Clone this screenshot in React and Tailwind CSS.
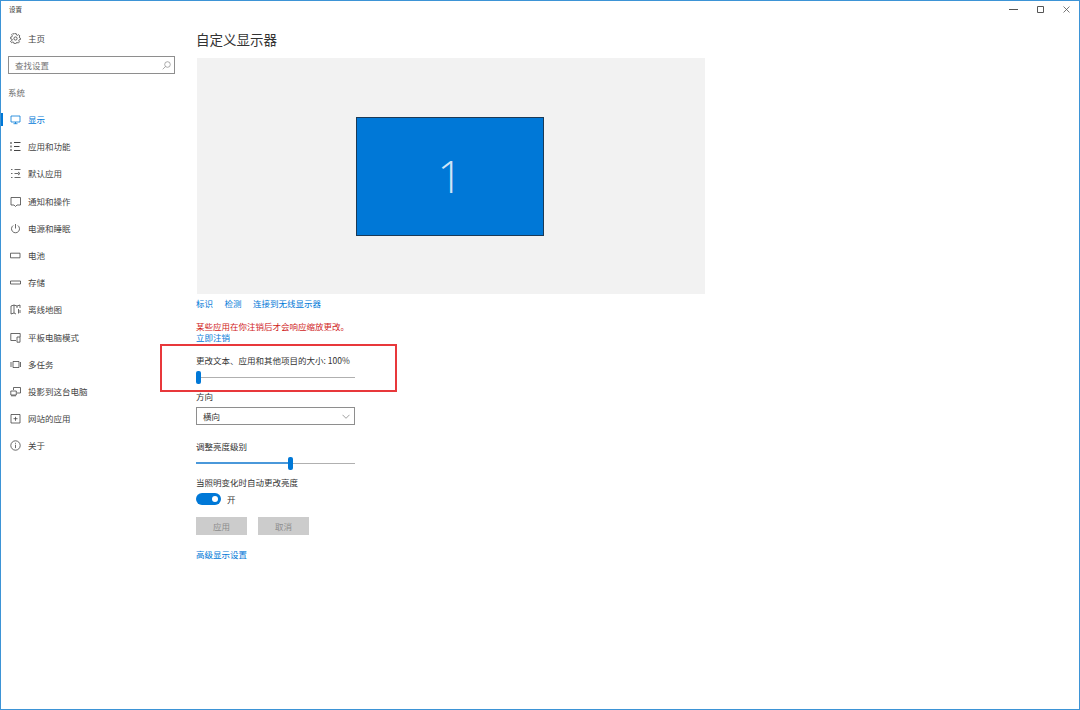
const Icon = ({ children }) => (
  <svg width="11" height="11" viewBox="0 0 11 11" fill="none" stroke="currentColor" strokeWidth="0.8" className="shrink-0">
    {children}
  </svg>
);

const navItems = [
  {
    label: '显示',
    active: true,
    icon: <path d="M1 2h9v6H1zM3.500 9.700h4M5.500 8v1.700" />,
  },
  {
    label: '应用和功能',
    icon: <path d="M1 1v2M1 4.500v2M1 8v2M4 1.500h6.500M4 5.500h5.500M4 9.500h6.500" strokeWidth="1.100" />,
  },
  {
    label: '默认应用',
    icon: <path d="M1 1.500h1.500M1 5.500h1.500M1 9.500h1.500M4.500 1.500h6M4.500 5.500h4M8 4l2 1.500L8 7M4.500 9.500h6" />,
  },
  {
    label: '通知和操作',
    icon: <path d="M1 1.500h9.500v7.500H7L5.500 10.500 4 9H1z" />,
  },
  {
    label: '电源和睡眠',
    icon: (
      <>
        <path d="M3.200 2.500a4 4 0 1 0 4.600 0" />
        <path d="M5.500 1v4.500" />
      </>
    ),
  },
  {
    label: '电池',
    icon: <path d="M.5 3.200h9.500v4.600H.5z" />,
  },
  {
    label: '存储',
    icon: <path d="M.5 4h10v3H.5z" />,
  },
  {
    label: '离线地图',
    icon: <path d="M1 2l3-1 3 1 3-1v3M1 2v8l3-1 2 1M4 1v8M7 2v2M8.500 5v4.500M10 6v3" />,
  },
  {
    label: '平板电脑模式',
    icon: <path d="M6 8.500H.8V1.500h9.400v3.500M7 5h3v5.200H7z" />,
  },
  {
    label: '多任务',
    icon: <path d="M3 2.500h6v6H3zM1 3v5M10.500 3v5" />,
  },
  {
    label: '投影到这台电脑',
    icon: <path d="M3.500 4V1.500h7v5.500H7M.8 5h5.500v4H.8zM1 9.800h5" />,
  },
  {
    label: '网站的应用',
    icon: <path d="M1 1.500h9v8.500H1zM3.500 5.700h4M5.500 3.800v4" />,
  },
  {
    label: '关于',
    icon: (
      <>
        <circle cx="5.500" cy="5.500" r="4.700" />
        <path d="M5.500 4.700v3.400M5.500 2.800v1" />
      </>
    ),
  },
];

function Slider({ percent, marginTop }) {
  return (
    <div className={`relative h-[13px] w-[159px] ${marginTop}`}>
      <div className="absolute left-0 right-0 top-[6px] h-px bg-[#b0b0b0]" />
      <div className="absolute left-0 top-[5px] h-[2px] bg-[#4a98da]" style={{ width: `${percent}%` }} />
      <div
        className="absolute top-0 h-[13px] w-[5px] rounded-[2px] bg-[#0078d7]"
        style={{ left: `${percent}%` }}
      />
    </div>
  );
}

export default function App() {
  return (
    <div
      className="relative flex h-[710px] w-[1080px] flex-col overflow-hidden border border-[#3d94d6] bg-white text-[8.5px] leading-[11px] text-[#333]"
      style={{ fontFamily: '"Noto Sans CJK SC", "Liberation Sans", sans-serif' }}
    >
      {/* Title bar */}
      <div className="flex h-[16px] shrink-0 items-center justify-between">
        <span className="ml-[8px] mt-[1px] text-[6.5px] text-[#333]">设置</span>
        <div className="mt-[1px] flex items-center text-[#555]">
          <svg width="9" height="9" viewBox="0 0 9 9" stroke="currentColor" fill="none" className="mr-[19px]">
            <path d="M0 4.500h9" />
          </svg>
          <svg width="7" height="7" viewBox="0 0 7 7" stroke="currentColor" fill="none" className="mr-[19px]">
            <path d="M.5.5h6v6H.5z" />
          </svg>
          <svg width="7" height="7" viewBox="0 0 7 7" stroke="currentColor" fill="none" strokeWidth=".8" className="mr-[9px]">
            <path d="M.5.5l6 6M6.500.5l-6 6" />
          </svg>
        </div>
      </div>

      <div className="flex min-h-0 flex-1">
        {/* Sidebar */}
        <aside className="w-[195px] shrink-0">
          <div className="ml-[9px] mt-[14px] flex h-[14px] items-center gap-[7px] text-[#444]">
            <svg width="11" height="11" viewBox="0 0 24 24" fill="none" stroke="currentColor" strokeWidth="1.800">
              <circle cx="12" cy="12" r="3.500" />
              <path d="M10 2h4l.6 3 2.400 1 2.600-1.600 2.800 2.800L20.800 9.800l1 2.200 2 .6v3l-3 .6-1 2.400 1.600 2.600-2.800 2.800-2.600-1.600-2.400 1-.6 2h-4l-.6-3-2.400-1-2.600 1.600-2.800-2.800L5 17l-1-2.400-3-.6v-4l3-.6 1-2.400L3.400 4.400 6.200 1.600 8.800 3.200 10 2z" transform="scale(.94) translate(.5 -.5)" />
            </svg>
            <span>主页</span>
          </div>

          <div className="ml-[7px] mt-[11px] flex h-[18px] w-[167px] items-center justify-between border border-[#8e8e8e] pl-[6px] pr-[3px] text-[#767676]">
            <span>查找设置</span>
            <svg width="9" height="9" viewBox="0 0 9 9" fill="none" stroke="#888" strokeWidth=".7">
              <circle cx="5.500" cy="3.500" r="2.800" />
              <path d="M3.500 5.500L.7 8.300" />
            </svg>
          </div>

          <div className="ml-[7px] mt-[13px] h-[11px] text-[#6d6d6d]">系统</div>

          <nav className="mt-[8px]">
            {navItems.map((item) => (
              <div
                key={item.label}
                className={`relative flex h-[27.2px] items-center gap-[7px] pl-[9px] ${
                  item.active ? 'text-[#0078d7]' : 'text-[#444]'
                }`}
              >
                {item.active && <div className="absolute left-0 top-[7px] h-[13px] w-[2px] bg-[#0078d7]" />}
                <Icon>{item.icon}</Icon>
                <span>{item.label}</span>
              </div>
            ))}
          </nav>
        </aside>

        {/* Main */}
        <main className="flex-1">
          <h1 className="mt-[11.5px] h-[20px] text-[13.5px] font-normal leading-[20px] text-[#333]">自定义显示器</h1>

          <div className="ml-px mt-[9.5px] flex h-[236px] w-[508px] items-center justify-center bg-[#f2f2f2] pr-[2px]">
            <div className="flex h-[119px] w-[188px] items-center justify-center border border-[#1b3a57] bg-[#0078d7] text-[44px] font-light text-[#cfe4f7]">
              <span style={{ fontFamily: '"Open Sans", sans-serif' }}>1</span>
            </div>
          </div>

          <div className="mt-[4px] flex h-[11px] gap-[11.5px] text-[#0078d7]">
            <span>标识</span>
            <span>检测</span>
            <span>连接到无线显示器</span>
          </div>

          <p className="mt-[12px] h-[11px] text-[#d01c1c]">某些应用在你注销后才会响应缩放更改。</p>
          <p className="h-[11px] text-[#0078d7]">立即注销</p>

          <p className="mt-[12px] h-[11px]">更改文本、应用和其他项目的大小: 100%</p>
          <Slider percent={0} marginTop="mt-[5px]" />

          <p className="mt-[7px] h-[11px]">方向</p>
          <div className="mt-[5px] flex h-[18px] w-[159px] items-center justify-between border border-[#8e8e8e] pl-[6px] pr-[4px]">
            <span>横向</span>
            <svg width="8" height="5" viewBox="0 0 8 5" fill="none" stroke="#777" strokeWidth=".7">
              <path d="M.5.8L4 4.300 7.500.8" />
            </svg>
          </div>

          <p className="mt-[16px] h-[11px]">调整亮度级别</p>
          <Slider percent={58} marginTop="mt-[5px]" />

          <p className="mt-[7px] h-[11px]">当照明变化时自动更改亮度</p>
          <div className="mt-[5px] flex h-[12px] items-center gap-[6px]">
            <div className="flex h-[12px] w-[25px] items-center justify-end rounded-full bg-[#0078d7] pr-[3px]">
              <div className="h-[6px] w-[6px] rounded-full bg-white" />
            </div>
            <span>开</span>
          </div>

          <div className="mt-[12px] flex gap-[11px] text-[#8c8c8c]">
            <div className="flex h-[18px] w-[51px] items-center justify-center bg-[#cccccc]">应用</div>
            <div className="flex h-[18px] w-[51px] items-center justify-center bg-[#cccccc]">取消</div>
          </div>

          <p className="mt-[14px] h-[11px] text-[#0078d7]">高级显示设置</p>
        </main>
      </div>

      {/* Red annotation box */}
      <div className="absolute left-[159px] top-[343px] h-[48px] w-[237px] border-2 border-[#e8383b]" />
    </div>
  );
}
